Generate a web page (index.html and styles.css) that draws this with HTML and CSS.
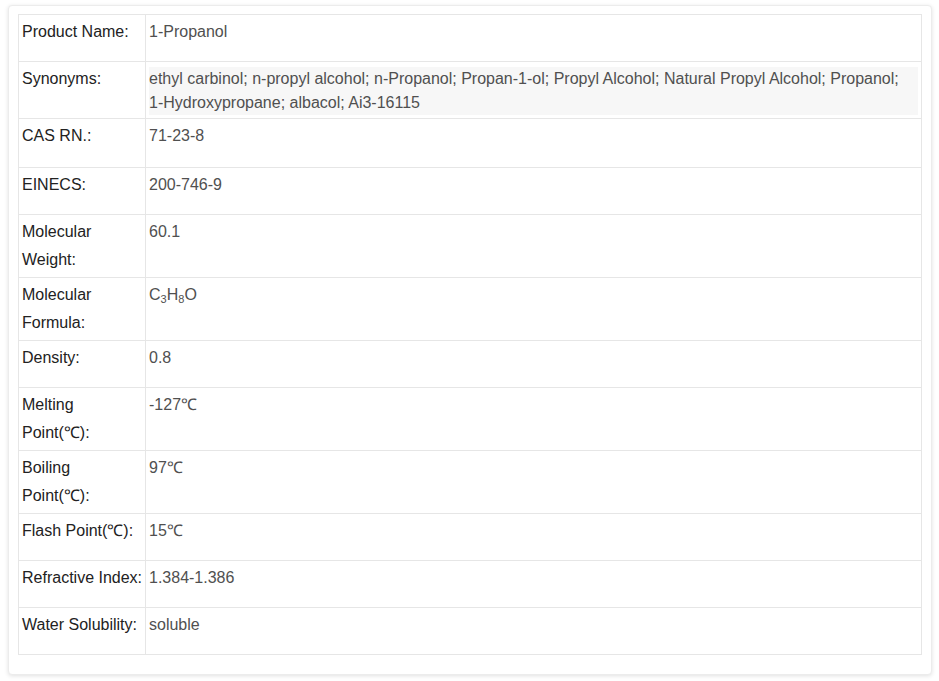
FILE: index.html
```html
<!DOCTYPE html>
<html lang="en">
<head>
  <meta charset="UTF-8" />
  <meta name="viewport" content="width=device-width, initial-scale=1.0"/>
  <title>1-Propanol</title>
  <link rel="stylesheet" href="styles.css">
</head>
<body>
  <!-- product details card -->
  <div class="detail-card">
    <table class="spec-table">
      <tr>
        <td class="label nowrap">Product Name:</td>
        <td>1-Propanol</td>
      </tr>
      <tr class="tall">
        <td class="label">Synonyms:</td>
        <td><div class="synonyms">ethyl carbinol; n-propyl alcohol; n-Propanol; Propan-1-ol; Propyl Alcohol; Natural Propyl Alcohol; Propanol; <span class="nowrap">1-Hydroxypropane;</span> albacol; Ai3-16115</div></td>
      </tr>
      <tr class="cas">
        <td class="label">CAS RN.:</td>
        <td>71-23-8</td>
      </tr>
      <tr>
        <td class="label">EINECS:</td>
        <td>200-746-9</td>
      </tr>
      <tr>
        <td class="label">Molecular Weight:</td>
        <td>60.1</td>
      </tr>
      <tr>
        <td class="label">Molecular Formula:</td>
        <td>C<sub>3</sub>H<sub>8</sub>O</td>
      </tr>
      <tr>
        <td class="label">Density:</td>
        <td>0.8</td>
      </tr>
      <tr>
        <td class="label">Melting Point(&#8451;):</td>
        <td>-127&#8451;</td>
      </tr>
      <tr>
        <td class="label">Boiling Point(&#8451;):</td>
        <td>97&#8451;</td>
      </tr>
      <tr>
        <td class="label nowrap">Flash Point(&#8451;):</td>
        <td>15&#8451;</td>
      </tr>
      <tr>
        <td class="label nowrap">Refractive Index:</td>
        <td>1.384-1.386</td>
      </tr>
      <tr>
        <td class="label nowrap">Water Solubility:</td>
        <td>soluble</td>
      </tr>
    </table>
  </div>
</body>
</html>
```

FILE: styles.css
```css
body {
  font-family: Arial, "Liberation Sans", sans-serif;
  background-color: #ffffff;
  margin: 0;
  padding: 5px 8px 5px 8px;
}

.detail-card {
  background-color: #ffffff;
  border: 1px solid #ececec;
  border-radius: 4px;
  box-shadow: 0 1px 4px rgba(0,0,0,0.12);
  padding: 8px 9px 19px 9px;
  width: 904px;
}

.spec-table {
  width: 904px;
  table-layout: fixed;
  border-collapse: collapse;
  border: 1px solid #e6e6e6;
  font-size: 16px;
  line-height: 28px;
}

.spec-table tr {
  height: 47px;
}

.spec-table td {
  border: 1px solid #e6e6e6;
  padding: 3px 3px 3px 3px;
  vertical-align: top;
  color: #505050;
}

.spec-table td.label {
  width: 120px;
  color: #222222;
}

.spec-table tr.tall {
  height: 57px;
}

.spec-table tr.cas {
  height: 49px;
}

.synonyms {
  background-color: #f7f7f7;
  line-height: 24px;
  margin: 2px 0 0 0;
}

.nowrap {
  white-space: nowrap;
}

sub {
  font-size: 11px;
  line-height: 0;
  vertical-align: -3px;
}
```
